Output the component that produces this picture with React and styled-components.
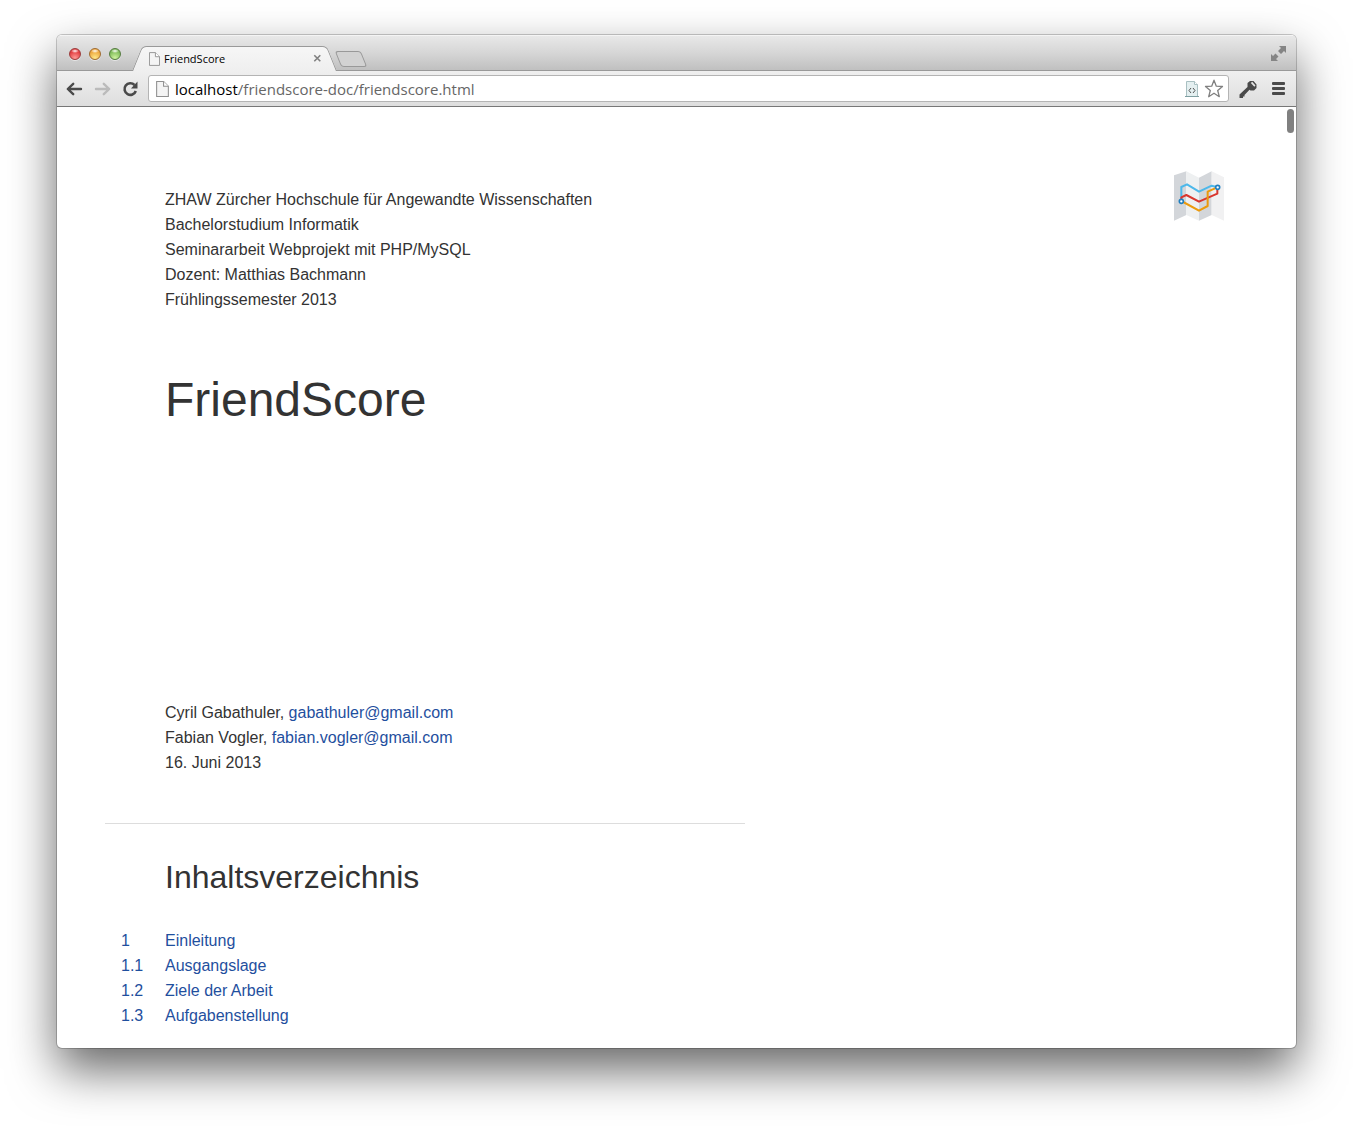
import React from "react";
import styled, { createGlobalStyle } from "styled-components";

const uiFont = `"Open Sans", "Noto Sans", sans-serif`;
const bodyFont = `"Liberation Sans", Arial, sans-serif`;

const GlobalStyle = createGlobalStyle`
  *, *::before, *::after { box-sizing: border-box; }
  body { margin: 0; background: #fff; overflow-x: hidden; }
`;

const Desktop = styled.div`
  padding: 35px 57px 78px;
`;

const Window = styled.div`
  border-radius: 5px;
  background: #fff;
  box-shadow: 0 0 0 1px rgba(0, 0, 0, 0.2), 0 22px 48px rgba(0, 0, 0, 0.6);
  overflow: hidden;
`;

const TabStrip = styled.div`
  display: flex;
  align-items: flex-end;
  height: 36px;
  padding-left: 12px;
  padding-right: 10px;
  background: linear-gradient(#e8e8e8, #d6d6d6 50%, #c0c0c0);
  border-top: 1px solid #f4f4f4;
  border-bottom: 1px solid #999;
`;

const Lights = styled.div`
  display: flex;
  gap: 8px;
  margin: 0 16px 10px 0;
`;

const Light = styled.button`
  width: 12px;
  height: 12px;
  padding: 0;
  border: 1px solid ${(p) => p.$edge};
  border-radius: 50%;
  background: radial-gradient(ellipse 4px 2px at 50% 20%, #fff, transparent),
    radial-gradient(circle at 50% 90%, ${(p) => p.$glow}, ${(p) => p.$tone} 70%);
  box-shadow: 0 1px 0 rgba(255, 255, 255, 0.5);
`;

const Tab = styled.div`
  position: relative;
  display: flex;
  align-items: center;
  width: 195px;
  height: 25px;
  margin-bottom: -1px;
  padding: 0 10px 0 12px;
  font: 11px/16px ${uiFont};
  color: #000;

  &::before,
  &::after {
    content: "";
    position: absolute;
    top: 0;
    bottom: 0;
    width: 60%;
    background: linear-gradient(#f6f6f6, #efefef);
    border-top: 1px solid #999;
  }
  &::before {
    left: 0;
    border-left: 1px solid #999;
    border-top-left-radius: 5px;
    transform: skewX(-22deg);
  }
  &::after {
    right: 0;
    border-right: 1px solid #999;
    border-top-right-radius: 5px;
    transform: skewX(22deg);
  }
  & > * {
    position: relative;
    z-index: 1;
  }
`;

const TabTitle = styled.span`
  flex: 1;
  margin-left: 4px;
`;

const IconButton = styled.button`
  display: flex;
  padding: 0;
  border: 0;
  background: none;
`;

const NewTab = styled.button`
  width: 26px;
  height: 16px;
  margin: 0 auto 3px 6px;
  padding: 0;
  border: 1px solid #999;
  border-radius: 3px;
  background: #d2d2d2;
  transform: skewX(22deg);
`;

const Expand = styled(IconButton)`
  align-self: center;
`;

const Toolbar = styled.div`
  display: flex;
  align-items: center;
  height: 36px;
  padding: 0 10px 0 9px;
  background: linear-gradient(#efefef, #dedede);
  border-bottom: 1px solid #777;
`;

const NavButtons = styled.div`
  display: flex;
  gap: 10px;
  margin-right: 9px;
`;

const AddressBar = styled.label`
  display: flex;
  flex: 1;
  align-items: center;
  height: 27px;
  padding: 0 4px 0 7px;
  background: #fff;
  border: 1px solid #b4b4b4;
  border-radius: 3px;
  font: 15px/20px ${uiFont};
  color: #000;
`;

const Host = styled.span`
  margin-left: 6px;
`;

const Path = styled.input`
  flex: 1;
  min-width: 0;
  padding: 0;
  border: 0;
  outline: 0;
  background: none;
  font: inherit;
  color: #666;
`;

const AddressActions = styled.div`
  display: flex;
  gap: 5px;
  align-items: center;
`;

const ToolActions = styled.div`
  display: flex;
  gap: 14px;
  align-items: center;
  margin-left: 10px;
`;

const Viewport = styled.div`
  position: relative;
  font: 16px/25px ${bodyFont};
  color: #333;
`;

const ScrollThumb = styled.div`
  position: absolute;
  top: 2px;
  right: 2px;
  width: 7px;
  height: 24px;
  border-radius: 4px;
  background: #808080;
`;

const Logo = styled.svg`
  position: absolute;
  top: 64px;
  right: 72px;
  width: 50px;
  height: 50px;
`;

const Article = styled.main`
  max-width: 688px;
  padding: 80px 0 20px 48px;
`;

const Cover = styled.header`
  padding: 0 0 48px 60px;
  border-bottom: 1px solid #ddd;
`;

const Lines = styled.p`
  margin: 0;
`;

const Title = styled.h1`
  margin: 56px 0 268px;
  font-size: 48px;
  line-height: 64px;
  font-weight: 400;
`;

const Link = styled.a`
  color: #1f4f9e;
  text-decoration: none;
`;

const Heading = styled.h2`
  margin: 32px 0 30px 60px;
  font-size: 32px;
  line-height: 42px;
  font-weight: 400;
`;

const Contents = styled.ul`
  margin: 0;
  padding: 0 0 0 16px;
  list-style: none;
`;

const Entry = styled(Link)`
  display: grid;
  grid-template-columns: 44px 1fr;
`;

const PageIcon = ({ width, height }) => (
  <svg width={width} height={height} viewBox="0 0 12 15" fill="#f4f4f4" stroke="#909090">
    <path d="M.5.5h6.500l4.500 4.500v9.500H.5z" />
    <path d="M7 .5v4.500h4.500" fill="#fff" />
  </svg>
);

const Arrow = ({ color, flip }) => (
  <svg
    width="18"
    height="16"
    viewBox="0 0 18 16"
    fill="none"
    stroke={color}
    strokeWidth="2.400"
    strokeLinecap="round"
    strokeLinejoin="round"
  >
    <path d={flip ? "M2 8h13M9.800 2.800L15.200 8l-5.400 5.200" : "M15 8H2M7.200 2.800L1.800 8l5.400 5.200"} />
  </svg>
);

const MapLogo = () => (
  <Logo viewBox="0 0 150 150" role="img" aria-label="FriendScore">
    <path d="M0 13L37 1v131L0 149z" fill="#d3d6da" />
    <path d="M37 1l38 19v129l-38-17z" fill="#eef0f1" />
    <path d="M75 20l38-19v131l-38 17z" fill="#d3d6da" />
    <path d="M113 1l37 18v130l-37-17z" fill="#f1f1f2" />
    <g fill="none" strokeWidth="6" strokeLinejoin="round">
      <path d="M22 90V48l17-8 36 22 38-18 17 5" stroke="#4db8ea" />
      <path d="M22 90V79l15-7 38 20 55-24V49" stroke="#d9362e" />
      <path d="M22 90l53 29 26-14V62l29-13" stroke="#eb9a0c" />
      <g fill="#fff" stroke="#1f7fc0" strokeWidth="5">
        <circle cx="22" cy="91" r="6" />
        <circle cx="131" cy="49" r="6" />
      </g>
    </g>
  </Logo>
);

const lights = [
  { name: "Schliessen", tone: "#e0383c", glow: "#ff9a96", edge: "#9c3c3c" },
  { name: "Minimieren", tone: "#eda43a", glow: "#ffe98a", edge: "#a06c30" },
  { name: "Zoomen", tone: "#7cb957", glow: "#d0f4a0", edge: "#557c40" },
];

const toc = [
  ["1", "Einleitung"],
  ["1.1", "Ausgangslage"],
  ["1.2", "Ziele der Arbeit"],
  ["1.3", "Aufgabenstellung"],
];

export default function App() {
  return (
    <Desktop>
      <GlobalStyle />
      <Window>
        <TabStrip>
          <Lights>
            {lights.map((l) => (
              <Light key={l.name} aria-label={l.name} $tone={l.tone} $glow={l.glow} $edge={l.edge} />
            ))}
          </Lights>
          <Tab>
            <PageIcon width={11} height={14} />
            <TabTitle>FriendScore</TabTitle>
            <IconButton aria-label="Tab schliessen">
              <svg width="9" height="9" viewBox="0 0 9 9" stroke="#808080" strokeWidth="1.600">
                <path d="M1.300 1.300l6 6M7.300 1.300l-6 6" />
              </svg>
            </IconButton>
          </Tab>
          <NewTab aria-label="Neuer Tab" />
          <Expand aria-label="Vollbild">
            <svg width="15" height="15" viewBox="0 0 15 15" fill="#858585">
              <path d="M8 0h7v7l-2-2-3 3-3-3 3-3z" />
              <path d="M0 8v7h7l-2-2 2.500-2.500-3-3L2 10z" />
            </svg>
          </Expand>
        </TabStrip>
        <Toolbar>
          <NavButtons>
            <IconButton aria-label="Zurück">
              <Arrow color="#4a4a4a" />
            </IconButton>
            <IconButton aria-label="Vorwärts">
              <Arrow color="#bbb" flip />
            </IconButton>
            <IconButton aria-label="Neu laden">
              <svg width="17" height="16" viewBox="0 0 17 16">
                <path d="M12.500 4A5.800 5.800 0 1 0 13.800 10" fill="none" stroke="#4a4a4a" strokeWidth="2.600" />
                <path d="M15.500.5v7H9z" fill="#4a4a4a" />
              </svg>
            </IconButton>
          </NavButtons>
          <AddressBar>
            <PageIcon width={13} height={16} />
            <Host>localhost</Host>
            <Path aria-label="Adresse" defaultValue="/friendscore-doc/friendscore.html" spellCheck={false} />
            <AddressActions>
              <IconButton aria-label="Quelltext">
                <svg width="14" height="16" viewBox="0 0 14 16" fill="none">
                  <path d="M1.500.5h8l3 3v12h-11z" fill="#e4eff0" stroke="#a9c0c2" />
                  <path d="M9.500.5v3h3" fill="#fff" stroke="#a9c0c2" />
                  <path d="M0 15.500h14" stroke="#7f9fa1" />
                  <path d="M6 7L4 9.500 6 12M8 7l2 2.500L8 12" stroke="#555" />
                </svg>
              </IconButton>
              <IconButton aria-label="Lesezeichen">
                <svg width="20" height="19" viewBox="0 0 20 19" fill="#fff" stroke="#808080" strokeWidth="1.300">
                  <path d="M10 1.200l2.300 6 6.200.3-4.800 4 1.600 6.200L10 14.200l-5.300 3.500 1.600-6.200-4.800-4 6.200-.3z" strokeLinejoin="round" />
                </svg>
              </IconButton>
            </AddressActions>
          </AddressBar>
          <ToolActions>
            <IconButton aria-label="Schlüssel">
              <svg width="18" height="18" viewBox="0 0 18 18" fill="#4a4a4a">
                <path d="M8.500 3L11 1h3.500L17.500 4.500V8L15 10.500h-3.500l-1-.8L5.500 15v1.500H4V18H.5v-3.500L8.500 7z" />
                <path d="M11.800 3l1.400-1.200 3.300 3.700-1.200 1.200z" fill="#e6e6e6" />
              </svg>
            </IconButton>
            <IconButton aria-label="Menü">
              <svg width="15" height="14" viewBox="0 0 15 14" fill="#4a4a4a">
                <rect x="1" y="0" width="13" height="3" rx="1" />
                <rect x="1" y="5" width="13" height="3" rx="1" />
                <rect x="1" y="10" width="13" height="3" rx="1" />
              </svg>
            </IconButton>
          </ToolActions>
        </Toolbar>
        <Viewport>
          <ScrollThumb />
          <MapLogo />
          <Article>
            <Cover>
              <Lines>
                ZHAW Zürcher Hochschule für Angewandte Wissenschaften
                <br />
                Bachelorstudium Informatik
                <br />
                Seminararbeit Webprojekt mit PHP/MySQL
                <br />
                Dozent: Matthias Bachmann
                <br />
                Frühlingssemester 2013
              </Lines>
              <Title>FriendScore</Title>
              <Lines>
                Cyril Gabathuler, <Link href="mailto:gabathuler@gmail.com">gabathuler@gmail.com</Link>
                <br />
                Fabian Vogler, <Link href="mailto:fabian.vogler@gmail.com">fabian.vogler@gmail.com</Link>
                <br />
                16. Juni 2013
              </Lines>
            </Cover>
            <Heading>Inhaltsverzeichnis</Heading>
            <Contents>
              {toc.map(([number, name]) => (
                <li key={number}>
                  <Entry href={`#${number}`}>
                    <span>{number}</span>
                    <span>{name}</span>
                  </Entry>
                </li>
              ))}
            </Contents>
          </Article>
        </Viewport>
      </Window>
    </Desktop>
  );
}
